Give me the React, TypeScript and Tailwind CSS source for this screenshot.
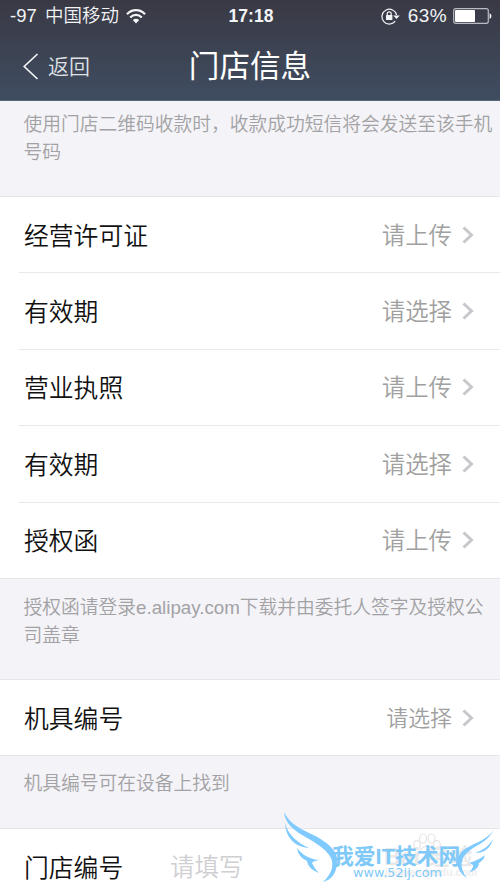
import clsx from 'clsx';

const certificates = [
  { label: '经营许可证', value: '请上传' },
  { label: '有效期', value: '请选择' },
  { label: '营业执照', value: '请上传' },
  { label: '有效期', value: '请选择' },
  { label: '授权函', value: '请上传' },
];

function StatusBar() {
  return (
    <div className="grid h-8 grid-cols-[1fr_auto_1fr] items-center pr-[8px] pl-[10px] text-[19px] leading-8">
      <div className="flex items-center">
        <span className="w-[35px] text-[18.5px]">-97</span>
        <span className="w-[81px] text-[18.5px] font-[350]">中国移动</span>
        <svg className="h-[15px] w-[20px]" viewBox="0 0 20 15" fill="none" stroke="currentColor" strokeWidth="2.2">
          <path d="M1 5.2C6-.2 14-.2 19 5.2" />
          <path d="M4.2 8.4c3.3-3.4 8.3-3.4 11.6 0" />
          <path d="M6.8 11 10 14.4 13.2 11c-1.8-1.7-4.6-1.7-6.4 0Z" fill="currentColor" stroke="none" />
        </svg>
      </div>
      <span className="text-[17.5px] font-bold">17:18</span>
      <div className="flex items-center justify-end">
        <svg className="mr-[8px] h-[17px] w-[19px]" viewBox="0 0 19 17" fill="none" stroke="currentColor" strokeWidth="1.2">
          <path d="M14.2 13.2A7.4 7.4 0 1 1 15.6 7" />
          <path d="M12.2 7.6h6.6l-3.3 3.5Z" fill="currentColor" stroke="none" />
          <rect x="5" y="7" width="6.4" height="5" rx=".5" fill="currentColor" stroke="none" />
          <path d="M6.2 7.2V5.8a2 2 0 0 1 4 0v1.4" />
        </svg>
        <span className="tracking-[0.4px]">63%</span>
        <svg className="ml-[6px] h-4 w-[39px]" viewBox="0 0 39 16" fill="none">
          <rect x=".7" y=".7" width="34.6" height="14.6" rx="2" stroke="#b9bcc3" strokeWidth="1.2" />
          <rect x="2" y="2" width="20" height="12" rx="1" fill="white" />
          <path d="M36.6 5.2c2.4.9 2.4 4.7 0 5.6Z" fill="white" />
        </svg>
      </div>
    </div>
  );
}

function Header() {
  return (
    <header className="h-[101px] border-b border-[#59677a] bg-linear-to-b from-[#393944] to-[#3f4d61] text-[#f3f4f6]">
      <StatusBar />
      <div className="grid h-[68px] grid-cols-[1fr_auto_1fr] items-center px-[23px]">
        <div className="flex items-center">
          <svg className="h-[27px] w-[16px]" viewBox="0 0 16 27" fill="none" stroke="currentColor" strokeWidth="1.7">
            <path d="M14.5 1 1.2 13.5 14.5 26" />
          </svg>
          <span className="ml-[9px] pt-px text-[21px] font-[350] text-[#dfe1e5]">返回</span>
        </div>
        <h1 className="pt-px text-[30.6px] leading-none text-white">门店信息</h1>
        <span />
      </div>
    </header>
  );
}

function Note({ children, className }: { children: React.ReactNode; className: string }) {
  return (
    <p className={clsx('border-b border-[#e6e6e8] bg-[#f4f3f8] pl-[23.5px] text-[18.75px] leading-7 font-[350] text-[#a2a2a4]', className)}>
      {children}
    </p>
  );
}

function Row({ label, value, small, last }: { label: string; value: string; small?: boolean; last?: boolean }) {
  return (
    <li className={clsx(last ? 'border-[#e6e6e8] pl-6' : 'ml-[19px] border-[#e9e9ea] pl-[5px]', 'flex h-[76.4px] items-center border-b pr-[26px]')}>
      <span className="pt-[3px] text-[24.8px] font-[350] text-[#111]">{label}</span>
      <span className={clsx('ml-auto pt-[3px] font-[350] text-[#a0a0a0]', small ? 'text-[21.9px]' : 'text-[23.4px]')}>{value}</span>
      <svg className="ml-[10px] h-[18px] w-[12px]" viewBox="0 0 12 18" fill="none" stroke="#c7c7cc" strokeWidth="3">
        <path d="m1.5 1.5 8 7.5-8 7.5" />
      </svg>
    </li>
  );
}

function Watermark() {
  return (
    <div className="absolute top-[810px] left-[280px] h-[78px] w-[220px]">
      <svg className="absolute inset-0 h-full w-full" viewBox="0 0 220 78" fill="none">
        <g stroke="#e4e4e4" strokeWidth="1.2">
          <ellipse cx="137" cy="35" rx="3.3" ry="4.3" />
          <ellipse cx="143" cy="28.5" rx="3.5" ry="4.5" />
          <ellipse cx="151.5" cy="28.5" rx="3.5" ry="4.5" />
          <ellipse cx="157" cy="35" rx="3.3" ry="4.3" />
          <path d="M138 46c0-5 5-10 9-10s9 5 9 10" />
        </g>
      </svg>
      <span className="absolute top-[33px] left-[104px] text-[23px] leading-7 font-bold whitespace-nowrap text-[#e9e9e9]">Bai 经验</span>
      <span className="absolute top-[52px] left-[105px] text-[10.5px] leading-5 font-bold whitespace-nowrap text-[#eeeeee]">jingyan.baidu.com</span>
      <svg className="absolute inset-0 h-full w-full" viewBox="0 0 220 78" fill="#7fcaff">
        <path d="M4 2C9 13 19 18 29 23C45 30 60 41 57 54C56 64 51 70 43 72C52 64 54 55 51 48C45 37 32 31 22 25C12 19 5 12 4 2Z" />
        <path d="M5 13C8 25 18 33 29 38C17 37 6 30 5 13Z" />
        <path d="M17 38C22 44 28 49 39 50C36 51 33 51 32 53C34 57 36 60 39 63C31 60 28 56 27 51C21 48 18 44 17 38Z" />
        <path d="M214 19C209 31 198 34 189 41C180 48 179 58 187 68C177 62 175 51 180 44C188 33 206 33 214 19Z" />
        <path d="M213 29C210 39 204 43 195 43C203 40 208 37 213 29Z" />
        <path d="M205 45C200 49 195 51 189 53C192 54 194 55 193 57L190 62C196 60 199 57 199 53C202 51 204 49 205 45Z" />
      </svg>
      <span className="absolute top-[31px] left-[52px] text-[21.8px] leading-8 font-bold whitespace-nowrap text-[#7fc9f8]">我爱IT技术网</span>
      <span className="absolute top-[53px] left-[73px] font-['DejaVu_Sans'] text-[12.8px] leading-5 whitespace-nowrap text-[#7fc9f8]">www.52ij.com</span>
    </div>
  );
}

export default function App() {
  return (
    <div className="relative h-[888px] w-[500px] overflow-hidden bg-white font-['Liberation_Sans','Noto_Sans_CJK_SC',sans-serif]">
      <Header />
      <main>
        <Note className="h-24 pt-[10px]">
          使用门店二维码收款时，收款成功短信将会发送至该手机
          <br />
          号码
        </Note>
        <ul>
          {certificates.map((item, index) => (
            <Row key={index} label={item.label} value={item.value} last={index === certificates.length - 1} />
          ))}
        </ul>
        <Note className="h-[101px] pt-[15px]">
          授权函请登录e.alipay.com下载并由委托人签字及授权公
          <br />
          司盖章
        </Note>
        <ul>
          <Row label="机具编号" value="请选择" small last />
        </ul>
        <Note className="h-[73px] pt-[14px]">机具编号可在设备上找到</Note>
        <div className="flex h-[76px] items-center pl-6">
          <label htmlFor="store-no" className="w-[146px] pt-[2px] text-[24.8px] font-[350] text-[#111]">门店编号</label>
          <input id="store-no" placeholder="请填写" className="w-[120px] pt-[2px] text-[24.5px] font-[350] outline-none placeholder:text-[#cfcfd2]" />
        </div>
      </main>
      <Watermark />
    </div>
  );
}
